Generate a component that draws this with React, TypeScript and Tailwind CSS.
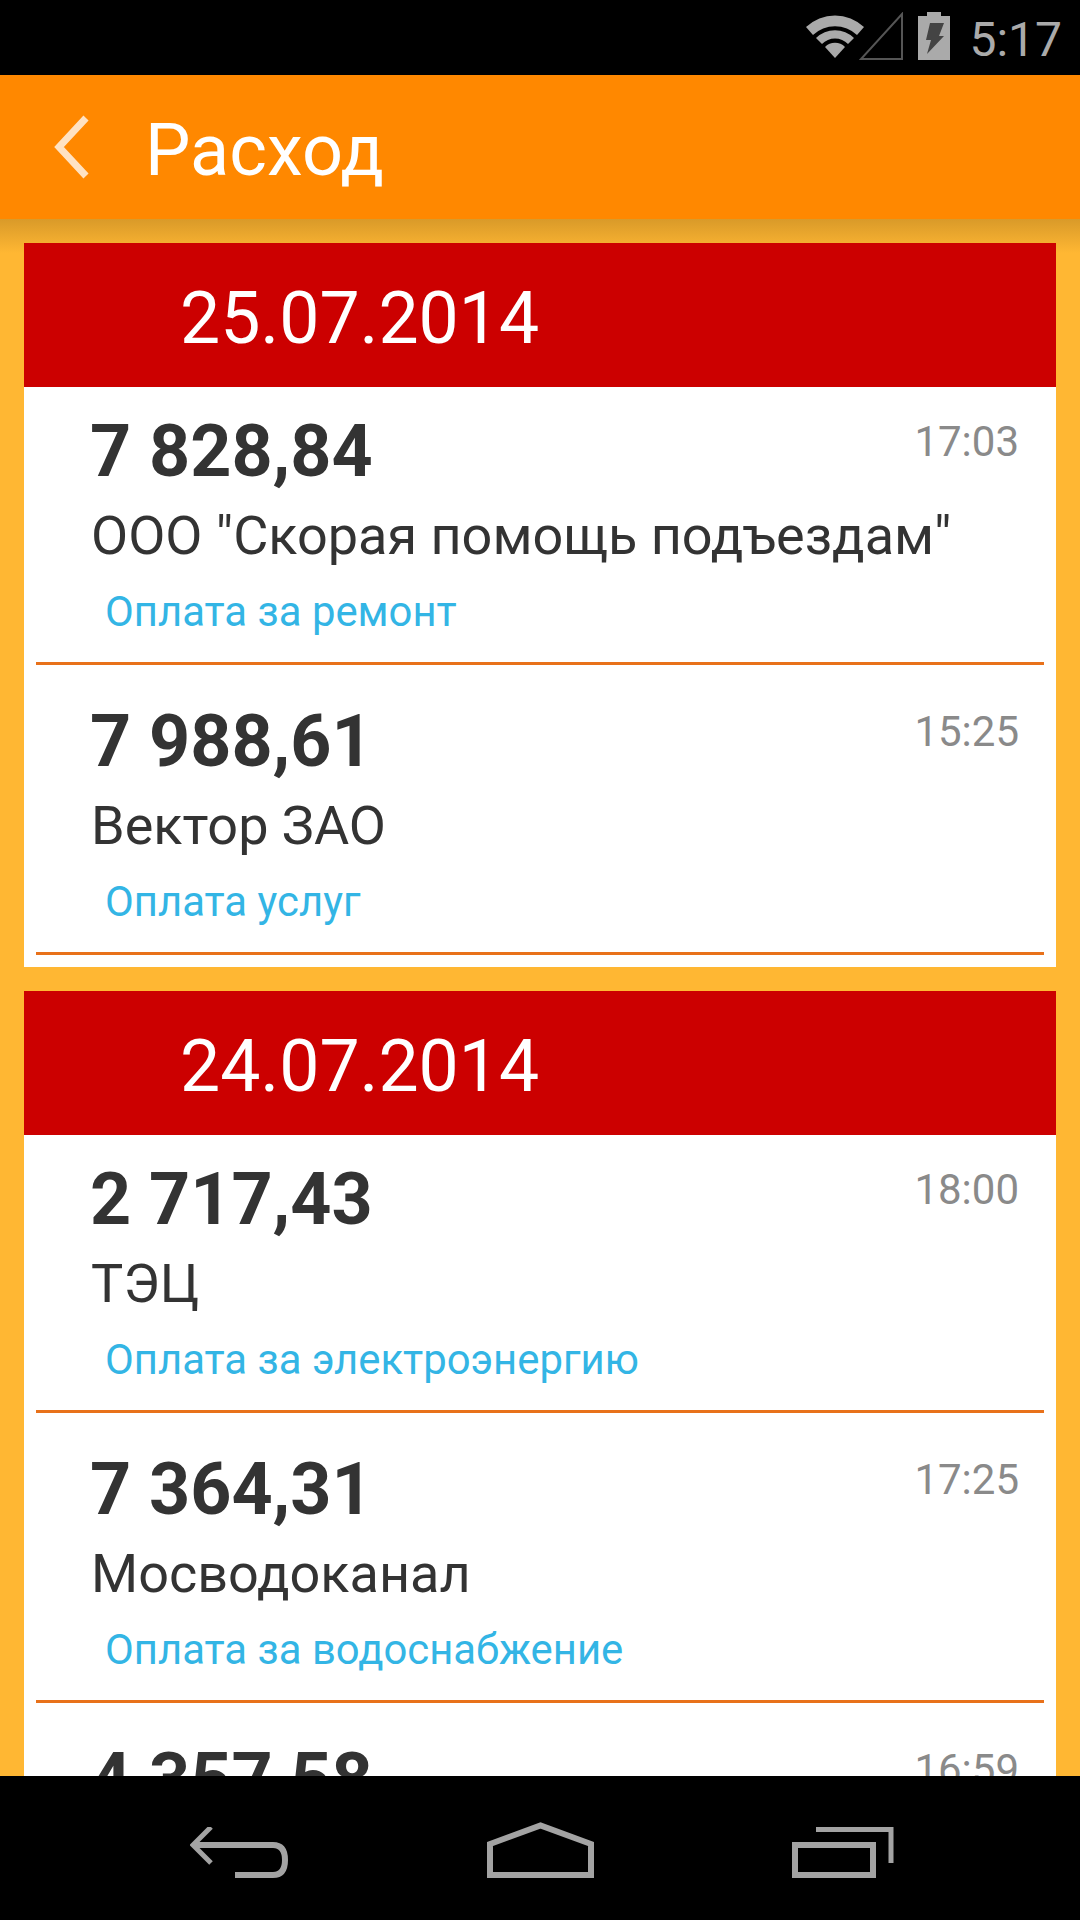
const font = { fontFamily: 'Roboto, sans-serif' };

type Item = { amount: string; name: string; note: string; time: string };

function Row({ item, first }: { item: Item; first: boolean }) {
  return (
    <div className={`mx-3 shrink-0 border-b-[3px] border-[#e8711a] flex flex-col ${first ? 'h-[278px]' : 'h-[290px] pt-[12px]'}`}>
      <div className="flex justify-between items-start pr-[25px] pl-[54px]">
        <span className="text-[71.8px] leading-[88px] font-bold text-[#333333] mt-[21px]">{item.amount}</span>
        <span className="text-[42px] leading-[48px] text-[#8a8a8a] mt-[31px]">{item.time}</span>
      </div>
      <div className="pl-[55px] text-[54px] leading-[60px] text-[#333333] mt-[10px] h-[60px]">{item.name}</div>
      <div className="pl-[69px] text-[41.85px] leading-[48px] text-[#33b5e5] mt-[22px] h-[48px]">{item.note}</div>
    </div>
  );
}

function Card({ date, items }: { date: string; items: Item[] }) {
  return (
    <div className="relative mx-6 mb-6 bg-white pb-3 shrink-0">
      <div className="h-[144px] bg-[#cc0000] flex items-center pl-[156px] pt-[7px] text-[71.5px] text-white">{date}</div>
      {items.map((it, i) => (
        <Row key={it.amount} item={it} first={i === 0} />
      ))}
    </div>
  );
}

export default function App() {
  return (
    <div style={font} className="w-[1080px] h-[1920px] bg-[#ffb733] flex flex-col overflow-hidden">
      <div className="h-[75px] bg-black shrink-0 flex items-start justify-end pr-[18px] relative z-20">
        <svg width="58" height="43" viewBox="0 0 58 43" className="mt-[15px]">
          <path d="M0 12 A42 42 0 0 1 58 12 L51 20 A32 32 0 0 0 7 20 Z" fill="#aaa" />
          <path d="M10 23 A27 27 0 0 1 48 23 L42 29 A18 18 0 0 0 16 29 Z" fill="#aaa" />
          <path d="M19 32 A14 14 0 0 1 39 32 L29 43 Z" fill="#aaa" />
        </svg>
        <svg width="44" height="48" viewBox="0 0 44 48" className="ml-[-5px] mt-[12px]">
          <path d="M43 2 V47 H2 Z" fill="none" stroke="#555" strokeWidth="2" />
        </svg>
        <svg width="32" height="48" viewBox="0 0 32 48" className="ml-[15px] mt-[12px]">
          <path d="M9 0 H23 V4 H32 V48 H0 V4 H9 Z" fill="#aaa" />
          <path d="M12 11 H26 L21 24 H26 L9 42 L13 28 H8 Z" fill="#444" />
        </svg>
        <span className="text-[48px] leading-none text-[#aaaaaa] ml-[19px] mt-[16px]">5:17</span>
      </div>
      <div className="h-[144px] bg-[#ff8800] shrink-0 flex items-center relative z-10">
        <svg width="36" height="64" viewBox="0 0 36 64" className="ml-[54px] shrink-0">
          <path d="M32 3 L5 32 L32 61" fill="none" stroke="#ffe2c2" strokeWidth="7" />
        </svg>
        <span className="text-[72px] text-white ml-[55px] leading-none mt-[7px]">Расход</span>
      </div>
      <div className="relative flex-1 min-h-0 overflow-hidden pt-6 flex flex-col">
        <div className="absolute left-0 right-0 top-0 h-[34px] bg-gradient-to-b from-[#d99a29] to-[#ffb733]" />
        <Card
          date="25.07.2014"
          items={[
            { amount: '7 828,84', name: 'ООО "Скорая помощь подъездам"', note: 'Оплата за ремонт', time: '17:03' },
            { amount: '7 988,61', name: 'Вектор ЗАО', note: 'Оплата услуг', time: '15:25' },
          ]}
        />
        <Card
          date="24.07.2014"
          items={[
            { amount: '2 717,43', name: 'ТЭЦ', note: 'Оплата за электроэнергию', time: '18:00' },
            { amount: '7 364,31', name: 'Мосводоканал', note: 'Оплата за водоснабжение', time: '17:25' },
            { amount: '4 357,58', name: '', note: '', time: '16:59' },
          ]}
        />
      </div>
      <div className="h-[144px] bg-black shrink-0 relative z-20 flex items-start justify-between pl-[190px] pr-[186px] pt-[46px]">
        <svg width="98" height="51" viewBox="0 0 98 51" className="mt-[5px]">
          <path d="M21 0 L3 18 L21 36" fill="none" stroke="#a3a3a3" strokeWidth="5" />
          <path d="M3 18 H83 Q95 18 95 33 Q95 48 83 48 H45" fill="none" stroke="#a3a3a3" strokeWidth="6" />
        </svg>
        <svg width="107" height="56" viewBox="0 0 107 56">
          <path d="M3 53 V22 L53.5 3.5 L104 22 V53 Z" fill="none" stroke="#a3a3a3" strokeWidth="6" />
        </svg>
        <svg width="102" height="51" viewBox="0 0 102 51" className="mt-[5px]">
          <path d="M24 2.5 H99 V36" fill="none" stroke="#a3a3a3" strokeWidth="5" />
          <rect x="3" y="18" width="78" height="30" fill="none" stroke="#a3a3a3" strokeWidth="6" />
        </svg>
      </div>
    </div>
  );
}
